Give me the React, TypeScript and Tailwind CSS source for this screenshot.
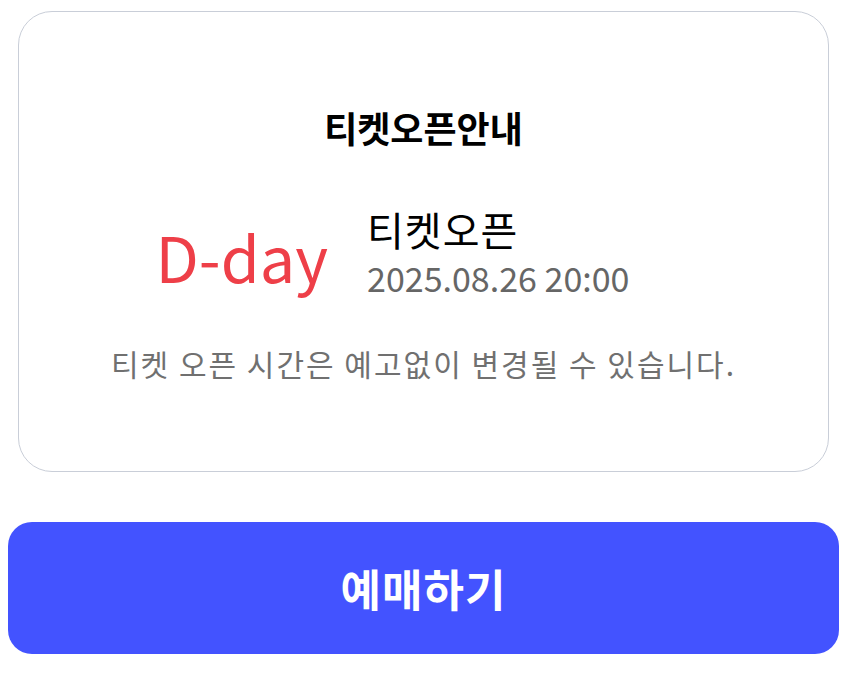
import React from "react";

export default function App() {
  return (
    <div
      className="w-[863px] h-[676px] bg-white"
      style={{ fontFamily: '"Noto Sans CJK KR", "Noto Sans", sans-serif' }}
    >
      <div className="w-[831px] pl-[8px] pt-[11px] box-content">
        <div className="mx-[10px] h-[461px] rounded-[34px] border border-[#c9ced8] flex flex-col items-center">
          <div className="mt-[95px] text-[36px] leading-[40px] font-bold text-black">티켓오픈안내</div>
          <div className="mt-[58px] mr-[62px] flex items-center">
            <div className="text-[63px] leading-[70px] text-[#ee3f48] mr-[39px] mt-[8px]">D-day</div>
            <div className="flex flex-col">
              <div className="text-[40px] leading-[48px] text-black tracking-[1px]">티켓오픈</div>
              <div className="mt-[4px] text-[34px] leading-[42px] text-[#666666]">2025.08.26 20:00</div>
            </div>
          </div>
          <div className="mt-[46px] text-[30px] leading-[36px] text-[#707070] tracking-[2px]">
            티켓 오픈 시간은 예고없이 변경될 수 있습니다.
          </div>
        </div>
        <button className="mt-[50px] w-[831px] h-[132px] rounded-[24px] bg-[#4353ff] text-white text-[44px] font-bold tracking-[1px] flex items-center justify-center">
          예매하기
        </button>
      </div>
    </div>
  );
}
